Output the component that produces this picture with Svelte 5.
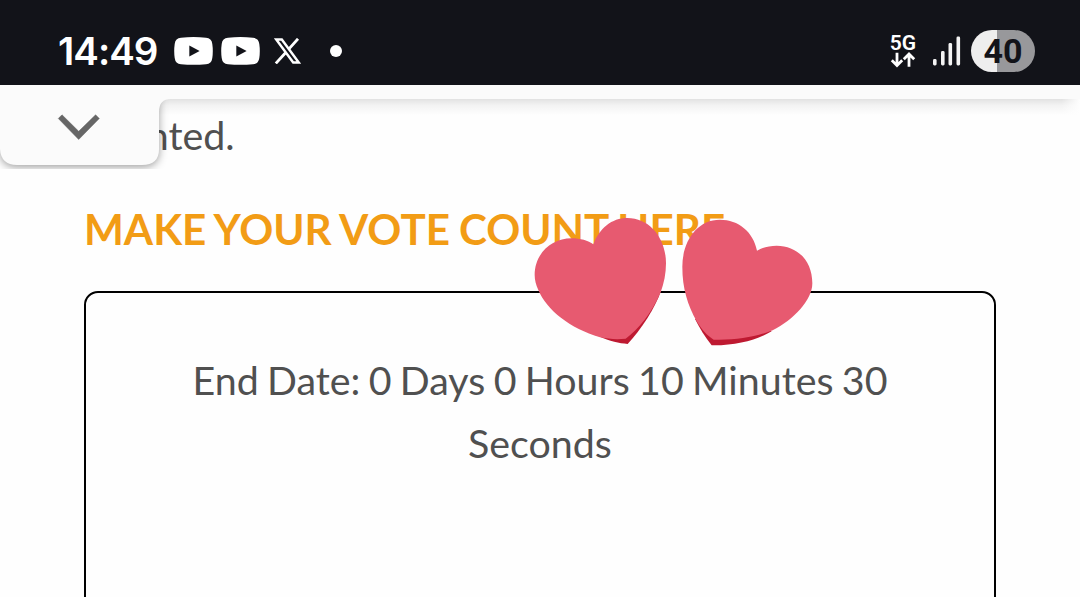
<script>
  const bars = [
    { x: 0, h: 6.5 },
    { x: 8, h: 14.5 },
    { x: 15.5, h: 22.5 },
    { x: 23.5, h: 29 }
  ];
</script>

<div class="screen">
  <header class="status">
    <span class="time">14:49</span>
    {#each [0, 1] as n (n)}
      <svg class="yt" viewBox="0 0 39 28" width="39" height="28" aria-hidden="true">
        <path d="M7 .8Q19.500-.6 32 .8Q37.600 1 38.300 7Q39.300 14 38.300 21Q37.600 26.800 32 27.200Q19.500 28.300 7 27.200Q1.400 26.800.7 21Q-.3 14 .7 7Q1.400 1 7 .8Z" fill="#fff" />
        <path d="M15.300 8.500V19.600L25.600 14Z" fill="#121319" />
      </svg>
    {/each}
    <svg class="x" viewBox="0 0 27 26" width="27" height="26" aria-hidden="true">
      <path d="M2.200 1.400H7.800L24.800 24.500H19.200Z" fill="none" stroke="#fff" stroke-width="2.500" />
      <path d="M24 .8 15 10.900M11.800 14.500 1.800 25.400" fill="none" stroke="#fff" stroke-width="2.800" />
    </svg>
    <i class="dot"></i>
    <div class="right">
      <div class="net">
        <span>5G</span>
        <svg viewBox="0 0 26 16" width="26" height="16" aria-hidden="true">
          <path d="M7 .8V13M1.800 8.200 7 13.400 12.200 8.200M19 14.800V2.500M13.800 7.300 19 2.100 24.200 7.300" fill="none" stroke="#fff" stroke-width="2.800" />
        </svg>
      </div>
      <svg class="signal" viewBox="0 0 28 30" width="28" height="30" aria-hidden="true">
        {#each bars as b (b.x)}
          <rect x={b.x} y={29.500 - b.h} width="3.600" height={b.h} rx="1.400" fill="#f4f4f4" />
        {/each}
      </svg>
      <div class="battery">40</div>
    </div>
  </header>

  <main>
    <p class="tail">counted.</p>
    <h1>MAKE YOUR VOTE COUNT HERE</h1>
    <section class="card">
      <p>End Date: 0 Days 0 Hours 10 Minutes 30<br />Seconds</p>
    </section>
  </main>

  <svg class="sheet" viewBox="0 0 1080 84" width="1080" height="84" aria-hidden="true">
    <defs>
      <linearGradient id="edge" x1="0" y1="0" x2="0" y2="1">
        <stop offset="0" stop-color="#000" stop-opacity=".11" />
        <stop offset=".4" stop-color="#000" stop-opacity=".045" />
        <stop offset="1" stop-color="#000" stop-opacity="0" />
      </linearGradient>
      <linearGradient id="fade" x1="0" x2="1">
        <stop offset=".98" stop-color="#fefefe" stop-opacity="0" />
        <stop offset="1" stop-color="#fefefe" />
      </linearGradient>
    </defs>
    <rect x="159" y="14" width="921" height="16" fill="url(#edge)" />
    <rect x="159" y="14" width="921" height="16" fill="url(#fade)" />
    <path class="tab" d="M0 0H159V64Q159 80 142 80H17Q1 80 0 64Z" fill="#fbfbfb" />
    <path d="M0 0H1080V14H171Q159 14 159 27H0Z" fill="#fbfbfb" />
    <path d="M58.300 33.500 62 29.800 78.700 46.300 95.600 29.800 99.300 33.500 78.700 54.500Z" fill="#666" stroke="#666" stroke-width=".5" />
  </svg>

  <svg class="hearts" viewBox="0 0 930 480" width="310" height="160" aria-hidden="true">
    <path d="M236 409C270 424 297 430 323 432C365 385 405 325 423 272L380 300Z" fill="#be1931" />
    <path d="M220 133C238 85 275 54 322 54C390 54 438 115 438 190C438 220 432 250 422 277C395 340 353 391 317 416C290 419 265 417 240 412C150 385 80 330 55 270C48 255 44 240 44 225C44 160 95 115 155 115C180 115 205 122 220 133Z" fill="#e75a70" />
    <path d="M525 357C540 387 555 410 575 436C650 437 710 420 755 394L600 320Z" fill="#be1931" />
    <path d="M711 152C700 95 655 59 600 59C530 59 487 125 487 200C487 265 503 315 530 364C546 391 562 407 581 419C650 421 710 410 758 391C820 360 877 300 877 250C877 180 830 137 770 137C748 137 727 142 711 152Z" fill="#e75a70" />
  </svg>
</div>

<style>
  :global(body) { margin: 0; overflow: hidden; background: #fff; }
  .screen { position: relative; width: 1080px; height: 597px; overflow: hidden; background: #fefefe; font-family: Lato, sans-serif; color: #505050; }
  .status { position: relative; z-index: 3; box-sizing: border-box; height: 85px; padding: 17px 45px 0 58px; display: flex; align-items: center; background: #121319; color: #fff; }
  .time { width: 116px; font: 600 38.500px/68px Inter, sans-serif; letter-spacing: -1px; white-space: nowrap; }
  .yt { flex: none; margin-right: 8px; }
  .x { margin-left: 6px; }
  .dot { width: 12px; height: 12px; border-radius: 50%; background: #fff; margin-left: 29px; }
  .right { display: flex; align-items: center; margin-left: auto; }
  .net { width: 28px; display: flex; flex-direction: column; align-items: center; font: 600 21px/18px Roboto, sans-serif; margin-right: 16px; }
  .signal { margin-right: 10px; }
  .battery { width: 64px; height: 42px; border-radius: 21px; background: linear-gradient(90deg, #eee 40%, #98989b 40%); color: #121319; font: 700 34px/43px Roboto, sans-serif; text-align: center; }
  main { padding: 18px 84px 0; }
  p, h1 { margin: 0; }
  .tail, .card { font-size: 39.375px; line-height: 63px; word-spacing: -1.750px; }
  h1 { margin-top: 35px; font-size: 42.190px; line-height: 56px; font-weight: 700; word-spacing: -1.300px; color: #f29c15; white-space: nowrap; }
  .card { box-sizing: border-box; width: 912px; height: 400px; margin-top: 34px; padding-top: 55px; border: 2px solid #000; border-radius: 14px; text-align: center; white-space: nowrap; }
  .sheet { position: absolute; z-index: 2; left: 0; top: 85px; overflow: hidden; }
  .tab { filter: drop-shadow(0 2px 4px rgba(0, 0, 0, .38)); }
  .hearts { position: absolute; z-index: 4; left: 520px; top: 200px; }
</style>
